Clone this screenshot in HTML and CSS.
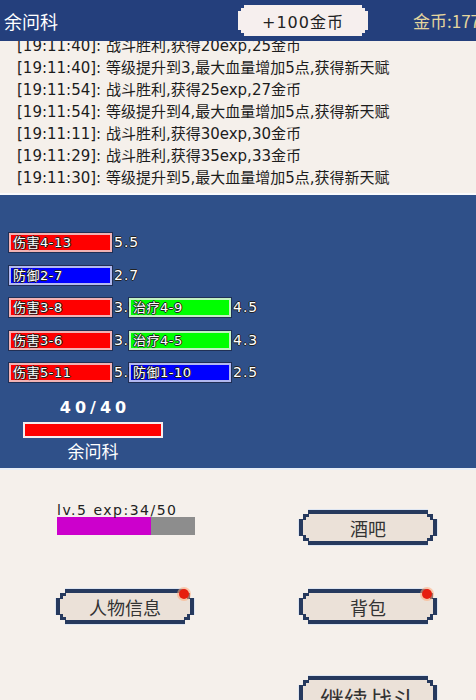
FILE: index.html
```html
<!DOCTYPE html>
<html lang="zh">
<head>
<meta charset="utf-8">
<title>余问科</title>
<link rel="stylesheet" href="styles.css">
</head>
<body>
<div class="app">
  <header class="topbar">
    <span class="name">余问科</span>
    <span class="pill stepped s3">+100金币</span>
    <span class="gold">金币:177</span>
  </header>

  <section class="log">
    <div class="log-list">
      <div class="line">[19:11:40]: 战斗胜利,获得20exp,25金币</div>
      <div class="line">[19:11:40]: 等级提升到3,最大血量增加5点,获得新天赋</div>
      <div class="line">[19:11:54]: 战斗胜利,获得25exp,27金币</div>
      <div class="line">[19:11:54]: 等级提升到4,最大血量增加5点,获得新天赋</div>
      <div class="line">[19:11:11]: 战斗胜利,获得30exp,30金币</div>
      <div class="line">[19:11:29]: 战斗胜利,获得35exp,33金币</div>
      <div class="line">[19:11:30]: 等级提升到5,最大血量增加5点,获得新天赋</div>
    </div>
  </section>

  <section class="battle">
    <div class="skills">
      <div class="bar red c1">伤害4-13</div>
      <div class="val c2">5.5</div>

      <div class="bar blue c1">防御2-7</div>
      <div class="val c2">2.7</div>

      <div class="bar red c1">伤害3-8</div>
      <div class="val c2 clip">3.5</div>
      <div class="bar green c3">治疗4-9</div>
      <div class="val c4">4.5</div>

      <div class="bar red c1">伤害3-6</div>
      <div class="val c2 clip">3.5</div>
      <div class="bar green c3">治疗4-5</div>
      <div class="val c4">4.3</div>

      <div class="bar red c1">伤害5-11</div>
      <div class="val c2 clip">5.5</div>
      <div class="bar blue c3">防御1-10</div>
      <div class="val c4">2.5</div>
    </div>

    <div class="hp">
      <div class="hp-num">40/40</div>
      <div class="hp-bar"></div>
      <div class="hp-name">余问科</div>
    </div>
  </section>

  <section class="menu">
    <div class="col-left">
      <div class="exp-text">lv.5 exp:34/50</div>
      <div class="exp-bar"><div class="exp-fill" style="width:68%"></div></div>

      <div class="btn-wrap btn-info">
        <div class="btn stepped s5"><div class="btn-frame stepped s4"><div class="btn-face stepped s3">人物信息</div></div></div>
        <span class="dot"></span>
      </div>
    </div>

    <div class="col-right">
      <div class="btn-wrap">
        <div class="btn stepped s5"><div class="btn-frame stepped s4"><div class="btn-face stepped s3">酒吧</div></div></div>
      </div>
      <div class="btn-wrap btn-bag">
        <div class="btn stepped s5"><div class="btn-frame stepped s4"><div class="btn-face stepped s3">背包</div></div></div>
        <span class="dot"></span>
      </div>
      <div class="btn-wrap btn-fight">
        <div class="btn stepped s5"><div class="btn-frame stepped s4"><div class="btn-face stepped s3 big">继续战斗</div></div></div>
      </div>
    </div>
  </section>
</div>
</body>
</html>
```

FILE: styles.css
```css
html, body {
  margin: 0;
  padding: 0;
}

body {
  width: 476px;
  height: 700px;
  overflow: hidden;
  background: #f5f0eb;
  font-family: "DejaVu Sans", "Noto Sans CJK SC", sans-serif;
}

.app {
  width: 476px;
  height: 700px;
  overflow: hidden;
}

/* stepped pixel corners */
.stepped {
  clip-path: polygon(
    calc(var(--s) * 2) 0,
    calc(100% - var(--s) * 2) 0,
    calc(100% - var(--s) * 2) var(--s),
    calc(100% - var(--s)) var(--s),
    calc(100% - var(--s)) calc(var(--s) * 2),
    100% calc(var(--s) * 2),
    100% calc(100% - var(--s) * 2),
    calc(100% - var(--s)) calc(100% - var(--s) * 2),
    calc(100% - var(--s)) calc(100% - var(--s)),
    calc(100% - var(--s) * 2) calc(100% - var(--s)),
    calc(100% - var(--s) * 2) 100%,
    calc(var(--s) * 2) 100%,
    calc(var(--s) * 2) calc(100% - var(--s)),
    var(--s) calc(100% - var(--s)),
    var(--s) calc(100% - var(--s) * 2),
    0 calc(100% - var(--s) * 2),
    0 calc(var(--s) * 2),
    var(--s) calc(var(--s) * 2),
    var(--s) var(--s),
    calc(var(--s) * 2) var(--s)
  );
}
.s3 { --s: 3px; }
.s4 { --s: 4px; }
.s5 { --s: 5px; }

/* top bar */
.topbar {
  height: 41px;
  background: #243f7c;
  display: grid;
  grid-template-columns: 238px 130px 1fr;
  align-items: center;
  overflow: hidden;
}

.name {
  padding-left: 4px;
  color: #ffffff;
  font-family: "Noto Sans CJK SC", sans-serif;
  font-size: 18px;
  line-height: 22px;
}

.pill {
  height: 31px;
  background: #f6efee;
  color: #222;
  font-size: 16px;
  letter-spacing: 1px;
  display: flex;
  align-items: center;
  justify-content: center;
}

.gold {
  padding-left: 45px;
  color: #e4d69d;
  font-family: "Noto Sans CJK SC", sans-serif;
  font-size: 17px;
  white-space: nowrap;
  overflow: hidden;
}

/* log */
.log {
  height: 152px;
  overflow: hidden;
  background: #f5f0eb;
  border-bottom: 2px solid #fafbfd;
}

.log-list {
  margin-top: -6px;
  padding-left: 17px;
}

.line {
  font-size: 15px;
  line-height: 22px;
  color: #1c1c1c;
  white-space: nowrap;
}

/* battle */
.battle {
  height: 275px;
  box-sizing: border-box;
  background: #2f5089;
  padding-top: 38px;
  border-bottom: 2px solid #e9eef6;
}

.skills {
  display: grid;
  grid-template-columns: 103px 17px 102px auto;
  grid-auto-rows: 19px;
  row-gap: 13.5px;
  padding-left: 9px;
}

.c1 { grid-column: 1; }
.c2 { grid-column: 2; }
.c3 { grid-column: 3; }
.c4 { grid-column: 4; }

.bar {
  box-sizing: border-box;
  height: 19px;
  border: 2px solid;
  box-shadow: 0 0 0 1px rgba(20, 20, 40, 0.55);
  color: #fff;
  font-size: 13px;
  line-height: 15px;
  padding-left: 2px;
  letter-spacing: 0.5px;
  white-space: nowrap;
  text-shadow: 1px 0 0 #222, -1px 0 0 #222, 0 1px 0 #222, 0 -1px 0 #222;
}
.red { background: #ff0000; border-color: #f2b2b4; }
.blue { background: #0000ff; border-color: #b2b8f0; }
.green { background: #00ff00; border-color: #c2f2c2; }

.val {
  padding-left: 2px;
  color: #fff;
  font-size: 14px;
  line-height: 19px;
  letter-spacing: 1px;
  white-space: nowrap;
  text-shadow: 1px 0 0 #222, -1px 0 0 #222, 0 1px 0 #222, 0 -1px 0 #222;
}

.val.clip {
  overflow: hidden;
  letter-spacing: 0.5px;
}

.hp {
  width: 140px;
  margin: 17px 0 0 23px;
  display: flex;
  flex-direction: column;
  align-items: center;
}

.hp-num {
  color: #fff;
  font-size: 16px;
  font-weight: bold;
  line-height: 18px;
  letter-spacing: 4px;
  padding-left: 4px;
}

.hp-bar {
  box-sizing: border-box;
  width: 140px;
  height: 16px;
  margin-top: 5px;
  background: #ff0000;
  border: 2px solid #f6eeee;
}

.hp-name {
  margin-top: 3px;
  color: #fff;
  font-family: "Noto Sans CJK SC", sans-serif;
  font-size: 17px;
  line-height: 20px;
}

/* menu */
.menu {
  display: flex;
  padding-left: 55px;
}

.col-left {
  width: 140px;
  padding-top: 33px;
}

.col-right {
  width: 140px;
  margin-left: 103px;
  padding-top: 39px;
}

.exp-text {
  margin-left: 2px;
  font-size: 14px;
  line-height: 14px;
  letter-spacing: 1.5px;
  color: #222;
  white-space: nowrap;
}

.exp-bar {
  margin-left: 2px;
  width: 138px;
  height: 18px;
  background: #8d8d8d;
}

.exp-fill {
  height: 100%;
  background: #cc00cc;
}

.btn-wrap {
  position: relative;
  width: 140px;
  height: 37px;
}

.btn-info { margin-top: 53px; }
.btn-bag { margin-top: 42px; }
.btn-fight {
  margin-top: 50px;
  height: 46px;
}

.btn {
  box-sizing: border-box;
  height: 100%;
  padding: 1px;
  background: #dde5f1;
}

.btn-frame {
  box-sizing: border-box;
  height: 100%;
  padding: 4px;
  background: #26395d;
}

.btn-face {
  height: 100%;
  background: #ebe1d8;
  display: flex;
  align-items: center;
  justify-content: center;
  color: #333;
  font-family: "Noto Sans CJK SC", sans-serif;
  font-size: 18px;
}

.btn-face.big {
  font-size: 24px;
}

.dot {
  position: absolute;
  top: 1px;
  right: 6px;
  width: 10px;
  height: 10px;
  border-radius: 50%;
  background: #e61e0e;
  box-shadow: 0 0 0 2px rgba(255, 170, 120, 0.55);
}
```
